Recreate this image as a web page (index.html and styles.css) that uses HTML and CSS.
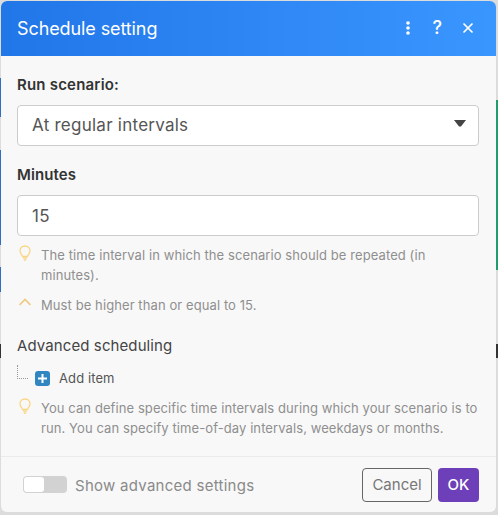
FILE: index.html
```html
<!DOCTYPE html>
<html lang="en">
  <head>
    <meta name="viewport" content="width=device-width, initial-scale=1.0" />
    <title>Schedule setting</title>
    <link rel="stylesheet" href="styles.css">
  </head>
  <body>
    <!-- bits of the canvas that show behind the dialog -->
    <div class="backdrop">
      <span class="strip strip-blue-1"></span>
      <span class="strip strip-blue-2"></span>
      <span class="strip strip-blue-3"></span>
      <span class="strip strip-green"></span>
      <span class="strip strip-dark-l"></span>
      <span class="strip strip-dark-r"></span>
    </div>

    <div class="dialog">
      <header class="dialog-head">
        <h1>Schedule setting</h1>
        <div class="head-icons">
          <svg width="6" height="14" viewBox="0 0 6 14"><circle cx="3" cy="2" r="1.8"/><circle cx="3" cy="7" r="1.8"/><circle cx="3" cy="12" r="1.8"/></svg>
          <span class="help">?</span>
          <svg class="close" width="12" height="12" viewBox="0 0 12 12"><path d="M1.5 1.5l9 9M10.5 1.5l-9 9"/></svg>
        </div>
      </header>

      <div class="dialog-body">
        <label class="field-label run-label">Run scenario:</label>
        <div class="control select-control">
          <span>At regular intervals</span>
          <svg class="caret" width="12" height="7" viewBox="0 0 12 7"><path d="M0 0h12L7 6.500H5z"/></svg>
        </div>

        <label class="field-label minutes-label">Minutes</label>
        <div class="control">15</div>

        <div class="hint first-hint">
          <svg class="bulb" width="12" height="16" viewBox="0 0 12 16"><path d="M3.500 11.500C3.200 9.500 1 8.500 1 5.700 1 3 3.200 1 6 1s5 2 5 4.700c0 2.800-2.200 3.800-2.500 5.800zM4 13.200h4M4.800 15h2.400"/></svg>
          <p>The time interval in which the scenario should be repeated (in minutes).</p>
        </div>
        <div class="hint must-hint">
          <svg class="chevron" width="12" height="16" viewBox="0 0 12 16"><path d="M0.500 10L6 4.500l5.500 5.500"/></svg>
          <p>Must be higher than or equal to 15.</p>
        </div>

        <div class="advanced-title">Advanced scheduling</div>
        <div class="add-row">
          <span class="tree-line"></span>
          <span class="add-btn">
            <svg width="9" height="9" viewBox="0 0 9 9"><path d="M4.500 0v9M0 4.500h9"/></svg>
          </span>
          <span>Add item</span>
        </div>
        <div class="hint advanced-hint">
          <svg class="bulb" width="12" height="16" viewBox="0 0 12 16"><path d="M3.500 11.500C3.200 9.500 1 8.500 1 5.700 1 3 3.200 1 6 1s5 2 5 4.700c0 2.800-2.200 3.800-2.500 5.800zM4 13.200h4M4.800 15h2.400"/></svg>
          <p>You can define specific time intervals during which your scenario is to run. You can specify time-of-day intervals, weekdays or months.</p>
        </div>
      </div>

      <footer class="dialog-foot">
        <div class="toggle-wrap">
          <span class="toggle"><span class="knob"></span></span>
          <span class="toggle-text">Show advanced settings</span>
        </div>
        <div class="buttons">
          <button class="btn btn-cancel">Cancel</button>
          <button class="btn btn-ok">OK</button>
        </div>
      </footer>
    </div>
  </body>
</html>
```

FILE: styles.css
```css
html,
body {
  margin: 0;
  height: 515px;
  overflow: hidden;
  background: #dcdcdc;
  font-family: Inter, "Liberation Sans", sans-serif;
}

.strip {
  position: absolute;
  display: block;
}

.strip-blue-1 { left: 0; top: 78px; width: 1px; height: 39px; background: #2d6fc0; }
.strip-blue-2 { left: 0; top: 150px; width: 1px; height: 95px; background: #2d6fc0; }
.strip-blue-3 { left: 0; top: 267px; width: 1px; height: 25px; background: #2d6fc0; }
.strip-green { left: 496px; top: 100px; width: 2px; height: 170px; background: #1f9d6a; }
.strip-dark-l { left: 0; top: 344px; width: 1px; height: 14px; background: #333; }
.strip-dark-r { left: 496px; top: 344px; width: 2px; height: 14px; background: #333; }

.dialog {
  position: absolute;
  left: 1px;
  top: 1px;
  width: 495px;
  height: 511px;
  display: flex;
  flex-direction: column;
  background: #f8f8f8;
  border-radius: 6px;
  overflow: hidden;
}

.dialog-head {
  height: 55px;
  display: flex;
  align-items: center;
  justify-content: space-between;
  padding: 0 22px 0 16px;
  background: linear-gradient(90deg, #2176e8, #3a96ff);
  color: white;
}

.dialog-head h1 {
  margin: 0;
  font-size: 18px;
  font-weight: 400;
  letter-spacing: -0.1px;
}

.head-icons {
  display: flex;
  align-items: center;
  gap: 21px;
  margin-top: -2px;
}

.head-icons svg {
  fill: white;
}

.help {
  margin: 0 -1px 0 1px;
  font-size: 18px;
  font-weight: 500;
  line-height: 20px;
}

.close path {
  stroke: white;
  stroke-width: 1.700;
  fill: none;
}

.dialog-body {
  flex: 1;
  padding: 19px 17px 0 16px;
}

.field-label {
  display: block;
  font-size: 15px;
  font-weight: 600;
  line-height: 20px;
  color: #333;
}

.run-label {
  letter-spacing: 0.2px;
}

.minutes-label {
  margin-top: 19px;
  letter-spacing: 0.1px;
}

.control {
  height: 41px;
  margin-top: 10px;
  padding: 0 14px;
  display: flex;
  align-items: center;
  justify-content: space-between;
  box-sizing: border-box;
  background: white;
  border: 1px solid #ccc;
  border-radius: 4px;
  font-size: 17px;
  letter-spacing: 0.25px;
  color: #555;
}

.select-control span {
  margin-top: -2px;
}

.caret {
  fill: #444;
  margin-top: -4px;
  margin-right: -2px;
}

.hint {
  display: flex;
  gap: 8px;
  font-size: 13px;
  line-height: 20px;
  letter-spacing: 0.09px;
  color: #8f8f8f;
}

.hint svg {
  flex: none;
  margin: 0 2px;
  fill: none;
}

.hint p {
  margin: 0;
}

.first-hint {
  margin-top: 9px;
}

.must-hint {
  margin-top: 10px;
}

.bulb path {
  stroke: #f9d684;
  stroke-width: 1.300;
}

.chevron path {
  stroke: #eecb83;
  stroke-width: 1.700;
}

.advanced-title {
  margin-top: 21px;
  font-size: 15px;
  line-height: 20px;
  color: #444;
  letter-spacing: 0.1px;
}

.add-row {
  display: flex;
  align-items: center;
  gap: 9px;
  height: 22px;
  margin-top: 11px;
  font-size: 13px;
  letter-spacing: 0.1px;
  color: #555;
}

.tree-line {
  width: 10px;
  height: 13px;
  margin-top: -12px;
  border-left: 1px dotted #999;
  border-bottom: 1px dotted #999;
}

.add-btn {
  width: 15px;
  height: 15px;
  margin-left: -2px;
  display: flex;
  align-items: center;
  justify-content: center;
  background: #2f86c1;
  border-radius: 3px;
}

.add-btn svg {
  stroke: white;
  stroke-width: 2;
}

.advanced-hint {
  margin-top: 9px;
}

.dialog-foot {
  height: 55px;
  display: flex;
  align-items: center;
  justify-content: space-between;
  padding: 0 17px 0 22px;
  border-top: 1px solid #ebebeb;
}

.toggle-wrap {
  display: flex;
  align-items: center;
  gap: 8px;
  font-size: 15px;
  color: #8a8a8a;
  letter-spacing: 0.27px;
}

.toggle-text {
  margin-top: 2px;
}

.toggle {
  width: 44px;
  height: 17px;
  display: block;
  padding: 1px;
  box-sizing: border-box;
  background: #d2d2d2;
  border-radius: 4px;
}

.knob {
  width: 20px;
  height: 15px;
  display: block;
  background: white;
  border-radius: 3px;
}

.buttons {
  display: flex;
  gap: 6px;
}

.btn {
  height: 34px;
  padding: 0;
  border-radius: 4px;
  font-family: inherit;
  font-size: 15px;
}

.btn-cancel {
  width: 70px;
  background: transparent;
  border: 1px solid #666;
  color: #777;
}

.btn-ok {
  width: 41px;
  background: #6d3fb8;
  border: 0;
  color: white;
  font-weight: 500;
}
```
